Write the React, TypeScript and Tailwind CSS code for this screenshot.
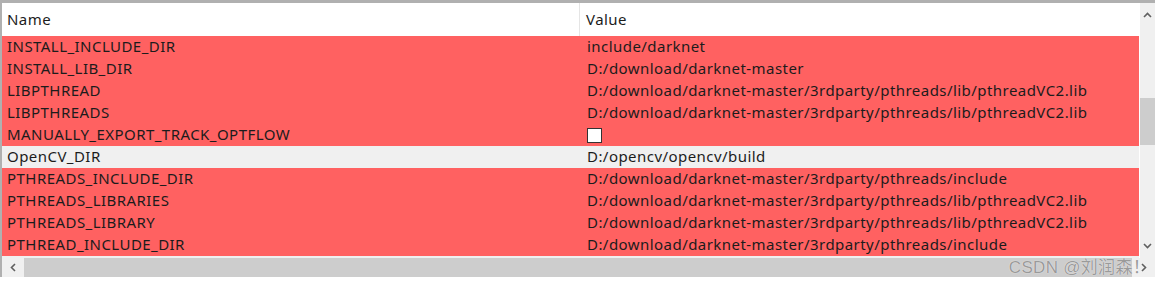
import React from "react";

const rows: { name: string; value: string; red: boolean; check?: boolean }[] = [
  { name: "INSTALL_INCLUDE_DIR", value: "include/darknet", red: true },
  { name: "INSTALL_LIB_DIR", value: "D:/download/darknet-master", red: true },
  { name: "LIBPTHREAD", value: "D:/download/darknet-master/3rdparty/pthreads/lib/pthreadVC2.lib", red: true },
  { name: "LIBPTHREADS", value: "D:/download/darknet-master/3rdparty/pthreads/lib/pthreadVC2.lib", red: true },
  { name: "MANUALLY_EXPORT_TRACK_OPTFLOW", value: "", red: true, check: true },
  { name: "OpenCV_DIR", value: "D:/opencv/opencv/build", red: false },
  { name: "PTHREADS_INCLUDE_DIR", value: "D:/download/darknet-master/3rdparty/pthreads/include", red: true },
  { name: "PTHREADS_LIBRARIES", value: "D:/download/darknet-master/3rdparty/pthreads/lib/pthreadVC2.lib", red: true },
  { name: "PTHREADS_LIBRARY", value: "D:/download/darknet-master/3rdparty/pthreads/lib/pthreadVC2.lib", red: true },
  { name: "PTHREAD_INCLUDE_DIR", value: "D:/download/darknet-master/3rdparty/pthreads/include", red: true },
];

export default function App() {
  return (
    <div
      className="relative w-[1155px] h-[286px] bg-white overflow-hidden text-[15px] tracking-[0.45px] text-[#1c1c1c]"
      style={{ fontFamily: '"Noto Sans", "Open Sans", sans-serif' }}
    >
      <div className="border-t-[3px] border-l-[2px] border-[#b0b0b0] flex flex-col">
        <div className="flex">
          <div className="w-[1138px] flex flex-col">
            {/* header */}
            <div className="h-[33px] flex bg-white">
              <div className="w-[578px] border-r border-[#e5e5e5] pl-[5px] flex items-center leading-none">Name</div>
              <div className="flex-1 pl-[6px] flex items-center leading-none">Value</div>
            </div>
            {rows.map((r) => (
              <div
                key={r.name}
                className={`h-[22px] flex items-center leading-none pb-[2px] ${r.red ? "bg-[#ff6161]" : "bg-[#f0f0f0]"}`}
              >
                <div className="w-[579px] pl-[5px] whitespace-nowrap">{r.name}</div>
                <div className="flex-1 pl-[6px] whitespace-nowrap flex items-center">
                  {r.check ? (
                    <div className="w-[15px] h-[15px] bg-white border border-[#333] mt-[2px]" />
                  ) : (
                    r.value
                  )}
                </div>
              </div>
            ))}
            <div className="h-[2px] bg-[#f0f0f0]" />
          </div>
          {/* vertical scrollbar */}
          <div className="w-[15px] bg-[#f0f0f0] flex flex-col items-center ml-px">
            <div className="h-[24px] flex items-center justify-center">
              <svg width="9" height="6" viewBox="0 0 9 6">
                <path d="M1 5 L4.5 1.5 L8 5" stroke="#606060" strokeWidth="1.6" fill="none" />
              </svg>
            </div>
            <div className="h-[71px]" />
            <div className="h-[47px] w-full bg-[#cdcdcd]" />
            <div className="flex-1" />
            <div className="h-[24px] flex items-center justify-center">
              <svg width="9" height="6" viewBox="0 0 9 6">
                <path d="M1 1 L4.5 4.5 L8 1" stroke="#606060" strokeWidth="1.6" fill="none" />
              </svg>
            </div>
          </div>
        </div>
        {/* horizontal scrollbar */}
        <div className="h-[19px] flex bg-[#f0f0f0]">
          <div className="w-[22px] flex items-center justify-center">
            <svg width="6" height="9" viewBox="0 0 6 9">
              <path d="M5 1 L1.5 4.5 L5 8" stroke="#606060" strokeWidth="1.6" fill="none" />
            </svg>
          </div>
          <div className="w-[1108px] bg-[#cdcdcd]" />
          <div className="flex-1 flex items-center justify-center">
            <svg width="6" height="9" viewBox="0 0 6 9">
              <path d="M1 1 L4.5 4.5 L1 8" stroke="#606060" strokeWidth="1.6" fill="none" />
            </svg>
          </div>
        </div>
      </div>
      <div
        className="absolute right-[5px] top-[255px] text-[17px] tracking-[0.3px] text-[#9a9a9a] whitespace-nowrap"
        style={{ fontFamily: '"Liberation Sans", "Noto Sans CJK SC", sans-serif', textShadow: "0 0 1px #fff" }}
      >
        CSDN @刘润森！
      </div>
    </div>
  );
}
